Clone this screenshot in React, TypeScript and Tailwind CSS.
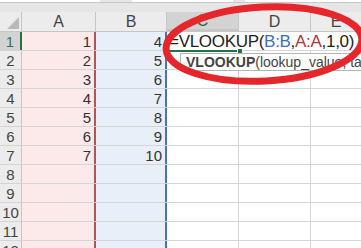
const FONT = { fontFamily: '"Liberation Sans", Arial, sans-serif' };

type Col = { key: string; w: string; cell: string };

const COLS: Col[] = [
  { key: "A", w: "w-[74px]", cell: "bg-[#fce9e9] border-r-2 border-[#c0504d]" },
  { key: "B", w: "w-[71px]", cell: "bg-[#e9eff9] border-r-2 border-[#4472c4]" },
  { key: "C", w: "w-[72px]", cell: "bg-white border-r border-[#d4d4d4]" },
  { key: "D", w: "w-[72px]", cell: "bg-white border-r border-[#d4d4d4]" },
  { key: "E", w: "flex-1", cell: "bg-white" },
];

const DATA: Record<string, (number | null)[]> = {
  A: [1, 2, 3, 4, 5, 6, 7],
  B: [4, 5, 6, 7, 8, 9, 10],
};

function HeaderRow() {
  return (
    <div className="flex h-[20px] border-b border-[#c6c6c6] bg-[#ececec] text-[16px] text-[#444]">
      <div className="relative w-[22px] border-r border-[#c6c6c6]">
        <svg className="absolute left-0 top-0" width="22" height="20">
          <polygon points="19,5 19,17 7,17" fill="#b9b9b9" />
        </svg>
      </div>
      {COLS.map((c) => {
        const active = c.key === "C";
        return (
          <div
            key={c.key}
            className={`${c.w} flex items-center justify-center leading-none ${
              active ? "bg-[#d3d3d3] border-b-2 border-[#217346] text-[#3b5e4b]" : ""
            } ${c.key !== "E" ? "border-r border-[#c6c6c6]" : ""}`}
          >
            {c.key}
          </div>
        );
      })}
    </div>
  );
}

function Row({ n }: { n: number }) {
  const active = n === 1;
  return (
    <div className="flex h-[19px] border-b border-[#d4d4d4]">
      <div
        className={`w-[22px] flex items-center justify-center text-[15px] leading-none ${
          active
            ? "bg-[#d3d3d3] border-r-2 border-[#217346] text-[#3b6e54]"
            : "bg-[#ececec] border-r border-[#c6c6c6] text-[#444]"
        }`}
      >
        {n}
      </div>
      {COLS.map((c) => {
        const v = DATA[c.key]?.[n - 1];
        return (
          <div
            key={c.key}
            className={`${c.w} ${c.cell} flex items-center justify-end pr-[3px] text-[15px] leading-none text-[#333]`}
          >
            {v ?? ""}
          </div>
        );
      })}
    </div>
  );
}

export default function App() {
  const rows = Array.from({ length: 12 }, (_, i) => i + 1);
  return (
    <div className="relative h-[248px] w-[361px] overflow-hidden bg-white" style={FONT}>
      <div className="h-[12px] bg-[#e6e6e6]">
        <div className="flex h-[3px] border-b border-[#c8c8c8]">
          <div className="w-[100px] bg-white" />
          <div className="w-[32px]" />
          <div className="w-[101px] bg-white" />
          <div className="w-[12px]" />
          <div className="flex-1 bg-white" />
        </div>
      </div>
      <HeaderRow />
      {rows.map((n) => (
        <Row key={n} n={n} />
      ))}

      {/* in-cell editor for C1 */}
      <div className="absolute left-[167px] top-[32px] flex h-[18px] w-[190px] items-center bg-white pl-[2px] text-[17px] leading-none tracking-[-0.3px] text-[#222]">
        <span>=VLOOKUP(</span>
        <span className="text-[#3c6fc4]">B:B</span>
        <span>,</span>
        <span className="text-[#b3343a]">A:A</span>
        <span>,1,0)</span>
      </div>
      <div className="absolute left-[167px] top-[50px] h-[2px] w-[71px] bg-[#217346]" />
      <div className="absolute left-[237px] top-[48px] h-[6px] w-[6px] border border-white bg-[#217346]" />

      {/* function tooltip */}
      <div className="absolute left-[180px] top-[53px] flex h-[18px] w-[200px] items-center whitespace-nowrap border border-[#b5b5b5] bg-white pl-[5px] text-[14px] leading-none text-[#444]">
        <span className="font-bold">VLOOKUP</span>
        <span>(lookup_value, table_array</span>
      </div>

      {/* red annotation ellipse */}
      <svg className="pointer-events-none absolute left-0 top-0" width="361" height="248">
        <ellipse
          cx="264"
          cy="44"
          rx="98"
          ry="37"
          fill="none"
          stroke="#e5262b"
          strokeWidth="7"
          transform="rotate(-3 264 44)"
        />
      </svg>
    </div>
  );
}
